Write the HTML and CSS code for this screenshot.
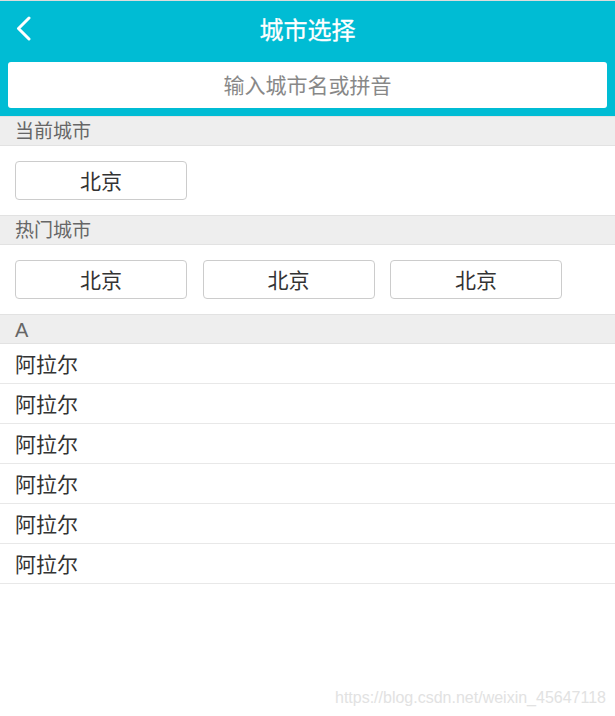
FILE: index.html
```html
<!DOCTYPE html>
<html lang="zh">
<head>
<meta charset="utf-8">
<title>城市选择</title>
<link rel="stylesheet" href="styles.css">
</head>
<body>
<div class="page">
  <header class="topbar">
    <div class="titlebar">
      <svg class="back" width="18" height="26" viewBox="0 0 18 26"><path d="M14 2 L3.5 12.5 L14 23" fill="none" stroke="#fff" stroke-width="3" stroke-linecap="round" stroke-linejoin="round"/></svg>
      <h1 class="title">城市选择</h1>
    </div>
    <div class="searchwrap">
      <div class="search">输入城市名或拼音</div>
    </div>
  </header>

  <div class="sechead">当前城市</div>
  <div class="btns">
    <div class="cbtn">北京</div>
  </div>

  <div class="sechead">热门城市</div>
  <div class="btns">
    <div class="cbtn">北京</div>
    <div class="cbtn">北京</div>
    <div class="cbtn">北京</div>
  </div>

  <div class="sechead letter">A</div>
  <ul class="list">
    <li>阿拉尔</li>
    <li>阿拉尔</li>
    <li>阿拉尔</li>
    <li>阿拉尔</li>
    <li>阿拉尔</li>
    <li>阿拉尔</li>
  </ul>
  <div class="watermark">https://blog.csdn.net/weixin_45647118</div>
</div>
</body>
</html>
```
FILE: styles.css
```css
html, body {
  margin: 0;
  padding: 0;
  background: #fff;
  font-family: "Liberation Sans", "Noto Sans CJK SC", sans-serif;
}
.page {
  position: relative;
  width: 615px;
  height: 716px;
  border-top: 1px solid #dcdcdc;
  box-sizing: border-box;
  overflow: hidden;
}
.topbar {
  background: #00bcd4;
  padding-bottom: 8px;
}
.titlebar {
  position: relative;
  height: 61px;
  display: flex;
  align-items: center;
  justify-content: center;
}
.back {
  position: absolute;
  left: 15px;
  top: 15px;
}
.title {
  margin: 0;
  color: #fff;
  font-size: 24px;
  font-weight: normal;
  -webkit-text-stroke: 0.3px #fff;
  position: relative;
  top: -3px;
}
.searchwrap {
  padding: 0 8px;
}
.search {
  background: #fff;
  border-radius: 3px;
  height: 46px;
  line-height: 47px;
  text-align: center;
  color: #888;
  font-size: 21px;
}
.sechead {
  background: #eeeeee;
  border-top: 1px solid #e2e2e2;
  border-bottom: 1px solid #e2e2e2;
  height: 28px;
  line-height: 29px;
  padding-left: 15px;
  color: #666;
  font-size: 19px;
}
.sechead.letter {
  font-size: 20px;
  line-height: 30px;
}
.btns {
  display: grid;
  grid-template-columns: repeat(3, 172px);
  column-gap: 15.5px;
  padding: 15px 15px;
}
.cbtn {
  box-sizing: border-box;
  height: 39px;
  line-height: 39px;
  border: 1px solid #cccccc;
  border-radius: 4px;
  text-align: center;
  color: #333;
  font-size: 21px;
}
.list {
  list-style: none;
  margin: 0;
  padding: 0;
}
.list li {
  box-sizing: border-box;
  height: 40px;
  padding-top: 2px;
  line-height: 37px;
  border-bottom: 1px solid #e8e8e8;
  padding-left: 15px;
  color: #333;
  font-size: 21px;
}
.watermark {
  position: absolute;
  right: 9px;
  bottom: 9px;
  color: #e2e2e2;
  font-size: 16px;
  font-family: "Liberation Sans", sans-serif;
}
```
